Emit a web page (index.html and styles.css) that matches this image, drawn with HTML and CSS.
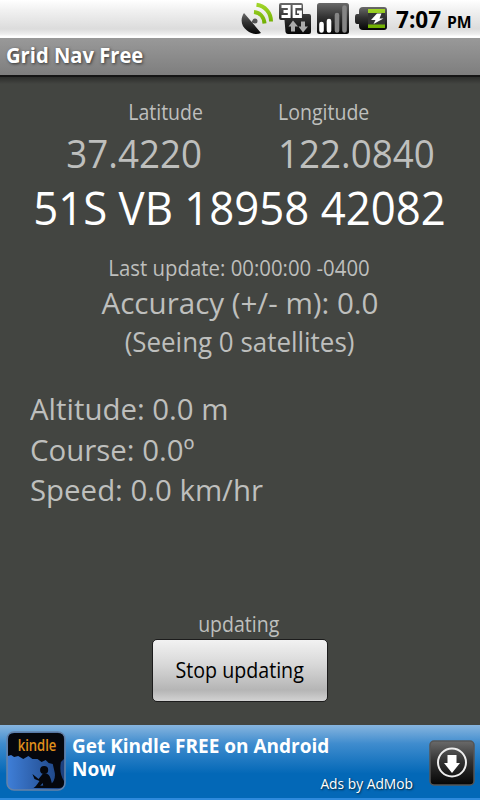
FILE: index.html
```html
<!DOCTYPE html>
<html lang="en">
<head>
  <meta charset="UTF-8">
  <meta name="viewport" content="width=device-width, initial-scale=1.0">
  <title>Grid Nav Free</title>
  <link rel="stylesheet" href="styles.css">
</head>
<body>
  <div class="screen">
    <div class="status-bar">
      <svg class="status-icons" width="150" height="38" viewBox="0 0 150 38">
        <defs>
          <linearGradient id="dark" x1="0" y1="0" x2="0" y2="1">
            <stop offset="0" stop-color="#6a6a6a"/>
            <stop offset="0.45" stop-color="#333"/>
            <stop offset="1" stop-color="#050505"/>
          </linearGradient>
          <linearGradient id="green" x1="0" y1="0" x2="0" y2="1">
            <stop offset="0" stop-color="#a0d428"/>
            <stop offset="1" stop-color="#6fae00"/>
          </linearGradient>
        </defs>
        <!-- gps -->
        <path d="M4 13C0 19 1 26 7 30.500C11 34 17 35 21 33Z" fill="url(#dark)"/>
        <path d="M12 22L15 21" stroke="#555" stroke-width="2"/>
        <circle cx="15" cy="21" r="2.500" fill="#555"/>
        <path d="M14 12C20 12.500 24 17 24.500 23.500M16.500 4.800C25 6 31 12.500 31 21.500" fill="none" stroke="url(#green)" stroke-width="4"/>
        <!-- 3g -->
        <path d="M41 3H61Q63 3 63 5V14H69Q71 14 71 16V32Q71 34 69 34H48Q46 34 45.500 32L44.500 20H41Q39 20 39 18V5Q39 3 41 3Z" fill="url(#dark)"/>
        <path d="M41.500 6.500H49.200V16.500H41.500M43.500 11.500H49.200M61.500 6.500H54V16.500H60.500V12H57" fill="none" stroke="#fff" stroke-width="2.800"/>
        <path d="M53 20.500L58 26.500H55V31.500H51V26.500H48.500ZM63 32.500L58.500 26.500H61V21.500H65V26.500H68Z" fill="#aaa"/>
        <!-- signal -->
        <rect x="77" y="3" width="32" height="31" rx="2.500" fill="url(#dark)"/>
        <path d="M81.500 24V30.500M89 21V30.500" stroke="#fff" stroke-width="4.600" stroke-linecap="round"/>
        <path d="M97 15V30.500M104.500 7.500V30.500" stroke="#858585" stroke-width="4.600" stroke-linecap="round"/>
        <!-- battery -->
        <path d="M123 7H144Q147 7 147 10V27Q147 30 144 30H123Q119 30 119 26V24H117Q115 24 115 21V17Q115 14 117 14H119V11Q119 7 123 7Z" fill="url(#dark)"/>
        <path d="M128 9H145V28H128Z" fill="url(#green)"/>
        <path d="M128 13H145V24.500H128Z" fill="#333"/>
        <path d="M137 13.500L131 20H135.500L133.500 24L143.500 18.500H139.500L141.500 13.500Z" fill="#fff"/>
      </svg>
      <div class="clock">7:07 <span class="ampm">PM</span></div>
    </div>

    <div class="title-bar"><span class="title">Grid Nav Free</span></div>

    <div class="content">
      <div class="coords">
        <div class="lat">
          <div class="label">Latitude</div>
          <div class="degrees">37.4220</div>
        </div>
        <div class="lon">
          <div class="label">Longitude</div>
          <div class="degrees">122.0840</div>
        </div>
      </div>
      <div class="mgrs">51S VB 18958 42082</div>

      <div class="last-update">Last update: 00:00:00 -0400</div>
      <div class="accuracy">Accuracy (+/- m): 0.0</div>
      <div class="satellites">(Seeing 0 satellites)</div>

      <div class="readings">
        <div class="altitude">Altitude: 0.0 m</div>
        <div class="course">Course: 0.0º</div>
        <div class="speed">Speed: 0.0 km/hr</div>
      </div>

      <div class="controls">
        <div class="state">updating</div>
        <button type="button" class="stop"><span class="stop-label">Stop updating</span></button>
      </div>
    </div>

    <div class="ad">
      <svg class="ad-icon" width="60" height="60" viewBox="0 0 59 60" preserveAspectRatio="none">
        <defs>
          <linearGradient id="sky" x1="0" y1="0" x2="1" y2="0">
            <stop offset="0" stop-color="#3f7fd8"/>
            <stop offset="1" stop-color="#1b3f7c"/>
          </linearGradient>
        </defs>
        <rect x="1" y="1" width="57" height="58" rx="7" fill="url(#sky)" stroke="#6683a8" stroke-width="1.500"/>
        <!-- tree and ground -->
        <path d="M2 8Q2 2 8 2H51Q57 2 57 8V28L54 31Q52 42 57 50V52Q57 57 52 57H27L30 55L43 54Q49 50 48 42L46 33L42 32L39 29L35 31L31 28L26 28L22 25L17 28L12 25L8 26L5 24L2 25Z" fill="#05070d"/>
        <!-- reader -->
        <circle cx="37.500" cy="39" r="4" fill="#05070d"/>
        <path d="M26 43L32 48L36 43Q42 41 44 48L46 56H37L36 52L32 57H28L33 50L28 48Z" fill="#05070d"/>
        <text class="kindle" x="11.500" y="20" textLength="38" lengthAdjust="spacingAndGlyphs">kindle</text>
      </svg>
      <div class="ad-text">
        <div class="ad-title">Get Kindle FREE on Android<br>Now</div>
        <div class="ad-by">Ads by AdMob</div>
      </div>
      <svg class="download" width="46" height="46" viewBox="0 0 46 46">
        <rect x="1" y="1" width="44" height="44" rx="4" fill="url(#dark)" stroke="#555" stroke-width="1.500"/>
        <circle cx="23" cy="22.500" r="14" fill="none" stroke="#eee" stroke-width="2"/>
        <path d="M18.500 15H27.500V23H31L23 33L15 23H18.500Z" fill="#fff"/>
      </svg>
    </div>
  </div>
</body>
</html>
```
FILE: styles.css
```css
body {
  margin: 0;
  font-family: "Open Sans", "Noto Sans", sans-serif;
  background-color: #434541;
}

.screen {
  width: 480px;
  height: 800px;
  display: flex;
  flex-direction: column;
  overflow: hidden;
  color: #bebfbd;
  white-space: nowrap;
}

.status-bar {
  height: 38px;
  box-sizing: border-box;
  padding-right: 9px;
  display: flex;
  justify-content: flex-end;
  background: linear-gradient(#fff 0, #f2f2f2 25%, #dcdcdc 76%, #eee 90%, #fff 96%);
}

.clock {
  width: 75px;
  margin-left: 6px;
  line-height: 38px;
  font-size: 23px;
  font-weight: 700;
  color: #000;
  transform: scaleX(0.98);
  transform-origin: left;
}

.ampm {
  font-size: 16px;
}

.title-bar {
  height: 39px;
  box-sizing: border-box;
  padding-left: 6px;
  line-height: 34px;
  font-size: 21px;
  font-weight: 700;
  color: #fff;
  text-shadow: 1px 1px 3px #333;
  background: linear-gradient(#999, #7e7e7e);
  border-bottom: 2px solid #151515;
}

.title {
  display: inline-block;
  transform: scaleX(0.96);
  transform-origin: left;
}

.content {
  flex: 1;
  display: flex;
  flex-direction: column;
  padding-top: 21px;
  text-align: center;
  background: linear-gradient(#2c2d2b, #434541 7px);
}

.coords {
  display: grid;
  grid-template-columns: 203px 1fr;
  column-gap: 75px;
}

.lat {
  text-align: right;
}

.lon {
  text-align: left;
}

.label, .last-update, .state {
  font-size: 21px;
  line-height: 28px;
}

.degrees {
  font-size: 38px;
  line-height: 54px;
}

/* squeeze the text to Droid Sans proportions */
.label {
  transform: scaleX(0.93);
}

.degrees {
  transform: scaleX(0.967);
}

.lat .degrees {
  padding-right: 1px;
}

.lat div {
  transform-origin: right;
}

.lon div {
  transform-origin: left;
}

.mgrs {
  font-size: 46px;
  line-height: 60px;
  margin-top: -3px;
  padding-right: 1px;
  color: #fff;
  transform: scaleX(0.951);
}

.last-update {
  margin-top: 17px;
  padding-right: 2px;
  transform: scaleX(0.97);
}

.accuracy {
  font-size: 30px;
  line-height: 42px;
  transform: scaleX(0.985);
}

.satellites {
  font-size: 27px;
  line-height: 35px;
  padding-right: 1px;
  transform: scaleX(0.96);
}

.readings {
  margin-top: 30px;
  padding-left: 30px;
  font-size: 30px;
  line-height: 40.5px;
  text-align: left;
  transform: scaleX(0.98);
  transform-origin: 30px 0;
}

.controls {
  margin-top: auto;
  margin-bottom: 23px;
  display: flex;
  flex-direction: column;
  align-items: center;
}

.state {
  padding-right: 2px;
  transform: scaleX(0.93);
}

.stop {
  width: 176px;
  height: 63px;
  margin-top: 1px;
  padding: 0 0 1px;
  font: inherit;
  font-size: 21px;
  color: #000;
  background: linear-gradient(#f2f2f2, #d8d8d8 40%, #b5b5b5 82%, #d2d2d2);
  border: 1px solid #1c1c1c;
  border-radius: 5px;
}

.stop-label {
  display: inline-block;
  transform: scaleX(0.935);
}

.ad {
  height: 75px;
  box-sizing: border-box;
  padding: 6px 5px 0 6px;
  display: flex;
  color: #fff;
  background: linear-gradient(#87b5df 0, #3f8cce 25%, #0368b7 65%, #0368b7 97%, #2e8add 98%);
}

.kindle {
  font-size: 16px;
  font-weight: 600;
  fill: #e0901c;
}

.ad-text {
  flex: 1;
  padding: 4px 16px 0 6px;
}

.ad-title {
  height: 41px;
  font-size: 19px;
  line-height: 23px;
  font-weight: 700;
}

.ad-by {
  font-size: 15px;
  line-height: 15px;
  text-align: right;
  text-shadow: 1px 1px 2px #023;
  transform: scaleX(0.92);
  transform-origin: right;
}

.download {
  margin-top: 9px;
}
```
